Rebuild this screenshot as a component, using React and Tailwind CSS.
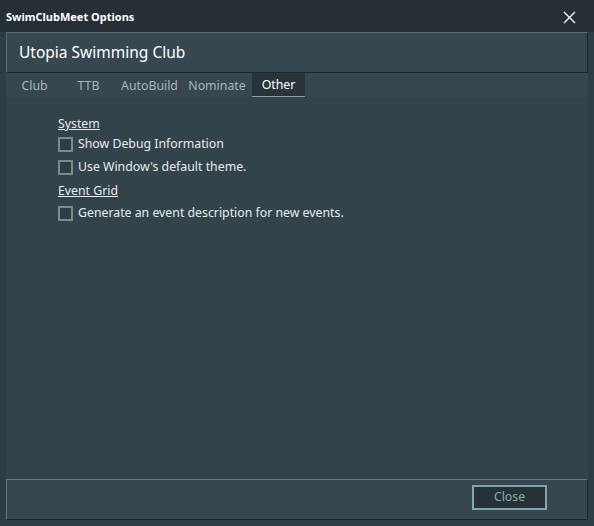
import React from "react";

function Check({ label }) {
  return (
    <div className="flex items-center h-[23px]">
      <div className="w-[15px] h-[15px] border-2 border-[#7d8b91] bg-[#2f3d44] mr-[5px]" />
      <span className="text-[#e6ecee]">{label}</span>
    </div>
  );
}

export default function App() {
  const tabs = ["Club", "TTB", "AutoBuild", "Nominate", "Other"];
  const widths = ["w-[51px]", "w-[57px]", "w-[65px]", "w-[70px]", "w-[53px]"];
  return (
    <div
      className="w-[594px] h-[526px] flex flex-col bg-[#2e3c43] text-[12.3px] overflow-hidden"
      style={{ fontFamily: '"Noto Sans", "Open Sans", sans-serif' }}
    >
      <div className="h-[32px] shrink-0 bg-[#262f35] flex items-center justify-between pl-[6px] pr-[14px] pt-[2px]">
        <span className="text-white font-bold text-[11px]">SwimClubMeet Options</span>
        <svg width="13" height="13" viewBox="0 0 13 13" className="mr-[4px]">
          <path d="M1 1L12 12M12 1L1 12" stroke="#ffffff" strokeWidth="1.3" />
        </svg>
      </div>
      <div className="flex-1 flex flex-col mx-[6px] mb-[6px] bg-[#37474f]">
        <div className="h-[41px] shrink-0 border-t border-l border-[#5b6b73] border-b border-r border-b-[#1c262b] border-r-[#1c262b] bg-[#37474f] flex items-center pl-[12px]">
          <span className="text-white text-[15.5px]">Utopia Swimming Club</span>
        </div>
        <div className="h-[24px] shrink-0 flex items-stretch pl-[3px]">
          {tabs.map((t, i) => {
            const active = t === "Other";
            return (
              <div
                key={t}
                className={`${widths[i]} flex items-center justify-center pt-[2px] ${
                  active
                    ? "bg-[#28343a] text-white border-b border-[#7fa3a6]"
                    : "text-[#a9b5b9]"
                }`}
              >
                {t}
              </div>
            );
          })}
        </div>
        <div className="flex-1 bg-[#33434a] pt-[18px] pl-[52px]">
          <div className="text-[#e6ecee] underline h-[18px] leading-[18px]">System</div>
          <Check label="Show Debug Information" />
          <Check label="Use Window's default theme." />
          <div className="text-[#e6ecee] underline h-[23px] leading-[23px]">Event Grid</div>
          <Check label="Generate an event description for new events." />
        </div>
        <div className="h-[41px] shrink-0 border-t border-l border-[#66777e] border-b border-r border-b-[#1c262b] border-r-[#1c262b] bg-[#37474f] flex items-start justify-end pr-[40px] pt-[5px]">
          <div className="w-[75px] h-[25px] border-2 border-[#7fa8a8] bg-[#263238] text-[#8aa9a9] flex items-center justify-center">
            Close
          </div>
        </div>
      </div>
    </div>
  );
}
